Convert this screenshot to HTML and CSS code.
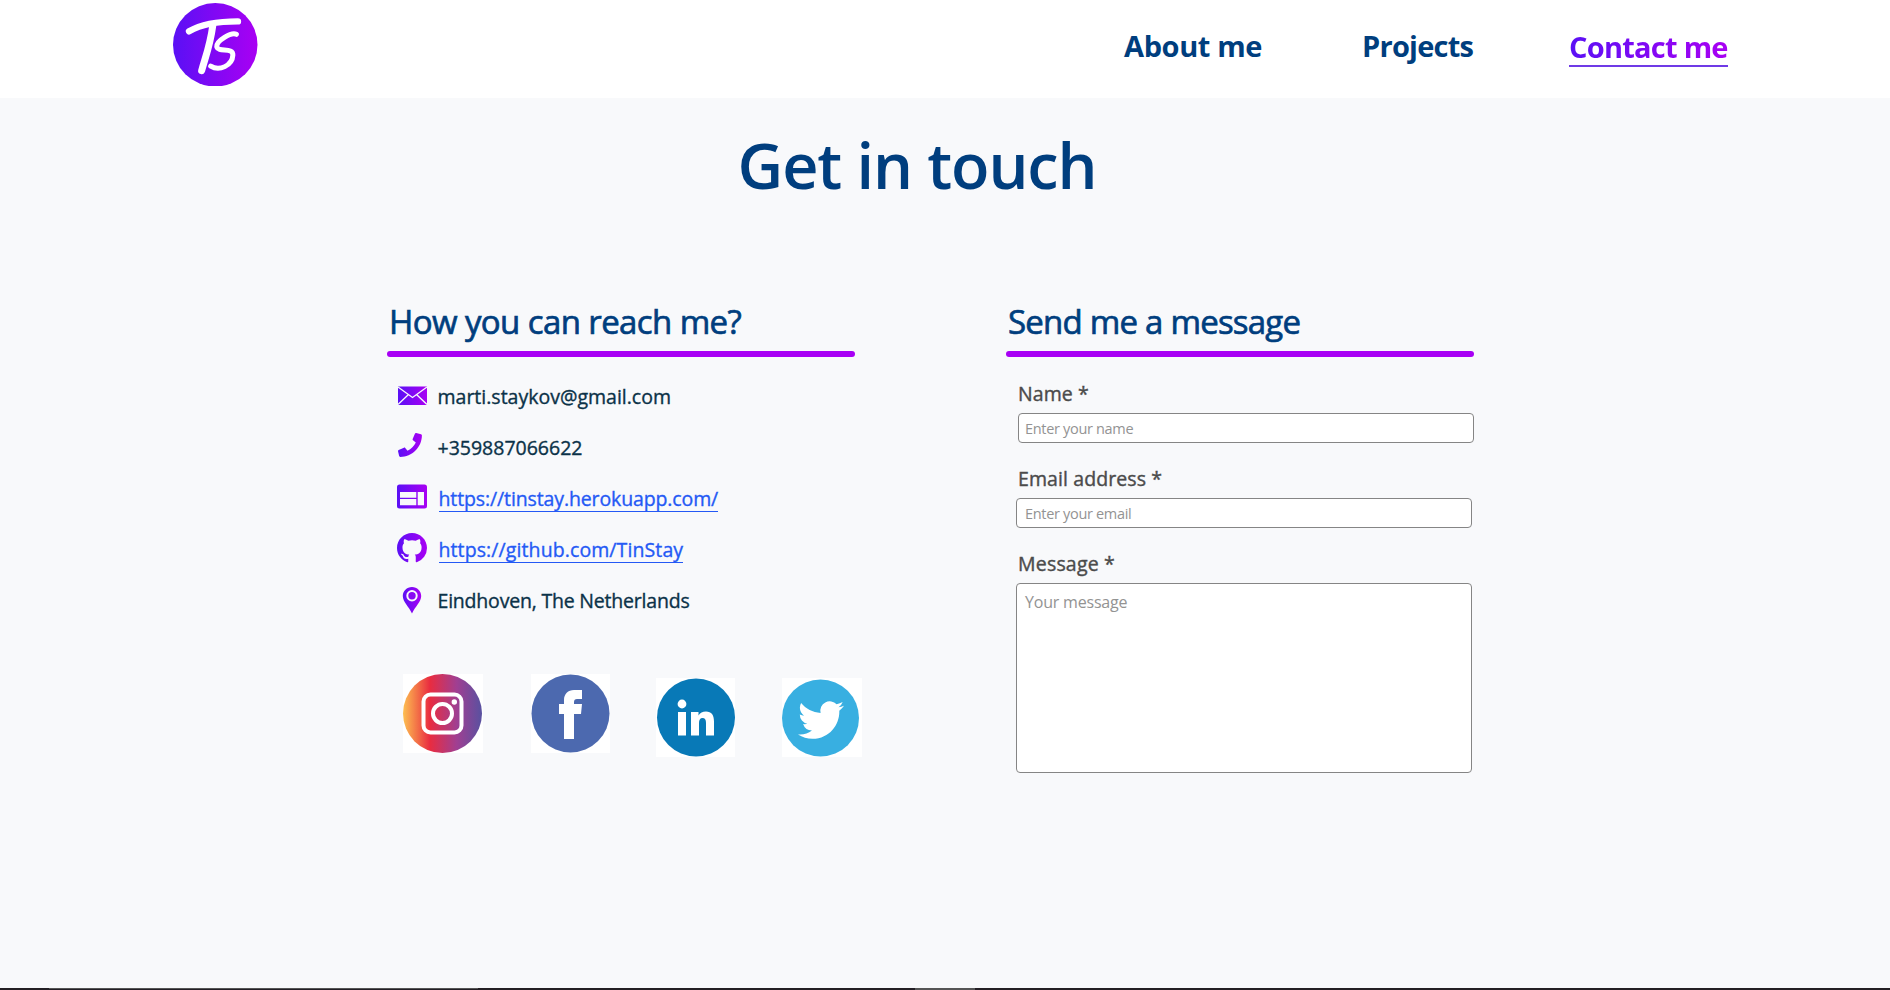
FILE: index.html
```html
<!DOCTYPE html>
<html lang="en">
<head>
<meta charset="utf-8">
<title>Contact me</title>
<link rel="stylesheet" href="styles.css">
</head>
<body>
<header class="header">
  <svg class="logo" viewBox="0 0 84 84" preserveAspectRatio="none">
    <defs>
      <linearGradient id="brand" x1="0" x2="1" y1="0" y2="0"><stop offset="0" stop-color="#5a10f5"/><stop offset="1" stop-color="#a900f3"/></linearGradient>
      <linearGradient id="insta" x1="0" x2="1" y1="0" y2="0"><stop offset="0" stop-color="#fdbf50"/><stop offset=".34" stop-color="#e92c40"/><stop offset=".68" stop-color="#a03f92"/><stop offset="1" stop-color="#5851a0"/></linearGradient>
    </defs>
    <circle cx="42" cy="42" r="42" fill="url(#brand)"/>
    <g fill="none" stroke="#fff" stroke-linecap="round" stroke-linejoin="round">
      <path stroke-width="6.500" d="M16 28.500C27 22 40 18.500 64.500 18.500"/>
      <path stroke-width="7" d="M39.500 23C37 42 33 52 28.500 68"/>
      <path stroke-width="5" d="M63 31.500C58 29 43 38 43.500 44C45 50 60 44 59.500 52.500C59 63 46 69 37.500 63.500"/>
    </g>
  </svg>
  <nav class="nav">
    <a class="nav-link about"><span>About me</span></a>
    <a class="nav-link projects"><span>Projects</span></a>
    <a class="nav-link active"><span>Contact me</span></a>
  </nav>
</header>
<main class="main">
  <h1 class="title"><span>Get in touch</span></h1>
  <div class="columns">
    <section class="column">
      <h2 class="heading reach"><span>How you can reach me?</span></h2>
      <ul class="contacts">
        <li class="contact"><svg class="icon" viewBox="0 0 30 30"><path fill="url(#brand)" d="M1 6.500h29v18.500H1z"/><path fill="none" stroke="#f8f9fb" stroke-width="1.300" d="M1 7l14.500 10.500L30 7M1 24.500l10.500-10M30 24.500l-10.500-10"/></svg><span class="mail">marti.staykov@gmail.com</span></li>
        <li class="contact"><svg class="icon" viewBox="0 0 30 30"><path fill="url(#brand)" transform="translate(1 2) scale(.0467)" d="M493.400 24.600l-104-24c-11.300-2.600-22.900 3.300-27.500 13.900l-48 112c-4.200 9.800-1.400 21.300 6.900 28l60.600 49.600c-36 76.700-98.900 140.500-177.200 177.200l-49.600-60.600c-6.800-8.300-18.200-11.100-28-6.900l-112 48C3.900 366.500-2 378.100.6 389.400l24 104C27.100 504.200 36.700 512 48 512c256.100 0 464-207.500 464-464 0-11.200-7.700-20.900-18.600-23.400z"/></svg><span class="phone">+359887066622</span></li>
        <li class="contact"><svg class="icon" viewBox="0 0 30 30"><path fill="url(#brand)" fill-rule="evenodd" d="M2.500 2.500h25a2.500 2.500 0 0 1 2.500 2.500v19a2.500 2.500 0 0 1-2.500 2.500h-25A2.500 2.500 0 0 1 0 24v-19A2.500 2.500 0 0 1 2.500 2.500zM3 10v5.700h16.300V10zM3 17v6.200h16.300v-6.200zM20.700 10v13.200H27V10z"/></svg><a class="web">https://tinstay.herokuapp.com/</a></li>
        <li class="contact"><svg class="icon" viewBox="0 0 16 16"><path fill="url(#brand)" d="M8 0C3.580 0 0 3.580 0 8c0 3.540 2.290 6.530 5.470 7.590.4.07.55-.17.55-.38 0-.19-.01-.82-.01-1.490-2.010.37-2.530-.49-2.690-.94-.09-.23-.48-.94-.82-1.130-.28-.15-.68-.52-.01-.53.63-.01 1.080.58 1.230.82.72 1.210 1.870.87 2.330.66.07-.52.28-.87.51-1.070-1.780-.2-3.640-.89-3.640-3.950 0-.87.31-1.590.82-2.150-.08-.2-.36-1.020.08-2.120 0 0 .67-.21 2.200.82.64-.18 1.320-.27 2-.27s1.360.09 2 .27c1.530-1.040 2.200-.82 2.200-.82.44 1.100.16 1.920.08 2.120.51.56.82 1.270.82 2.150 0 3.070-1.870 3.750-3.650 3.950.29.25.54.73.54 1.480 0 1.070-.01 1.930-.01 2.200 0 .21.15.46.55.38A8.010 8.010 0 0016 8c0-4.420-3.580-8-8-8z"/></svg><a class="git">https://github.com/TinStay</a></li>
        <li class="contact"><svg class="icon" viewBox="0 0 30 30"><path fill="url(#brand)" d="M15 3c-5.200 0-9.200 4-9.200 9 0 5.700 6 10.500 9.200 17.500 3.200-7 9.200-11.800 9.200-17.500 0-5-4-9-9.200-9z"/><circle cx="15" cy="11.700" r="4.700" fill="#8a08f4" stroke="#f8f9fb" stroke-width="2"/></svg><span class="place">Eindhoven, The Netherlands</span></li>
      </ul>
      <div class="socials">
        <svg class="social" viewBox="0 0 80 79"><path fill="#fff" d="M0 0h80v79H0z"/><circle cx="39.500" cy="39.500" r="39.500" fill="url(#insta)"/><g fill="none" stroke="#fff" stroke-width="4"><rect x="20.500" y="20.500" width="38" height="38" rx="7"/><circle cx="39.500" cy="39.500" r="9.500"/></g><circle cx="51.300" cy="28" r="2.700" fill="#fff"/></svg>
        <svg class="social facebook" viewBox="0 0 79 79"><path fill="#fff" d="M0 0h79v79H0z"/><circle cx="39.500" cy="39.500" r="39" fill="#4c69af"/><path fill="#fff" d="M33 65V40h-5V30h5v-4c0-6 4-10 10-10h8v9h-5c-2 0-3 1-3 3v2h8l-1 10h-7v25z"/></svg>
        <svg class="social low linkedin" viewBox="0 0 79 79"><path fill="#fff" d="M0 0h79v79H0z"/><circle cx="40" cy="39.500" r="39" fill="#0879b7"/><g fill="#fff"><circle cx="26" cy="26" r="4.400"/><path d="M22 34h8v23.500h-8zM35 34h7.500v3.500C44 35 46.500 33.500 50 33.500c5.500 0 8 3.500 8 10v14h-8V45c0-3.500-1-5-3.500-5S43 42 43 45v12.500h-8z"/></g></svg>
        <svg class="social low twitter" viewBox="0 0 80 79"><path fill="#fff" d="M0 0h80v79H0z"/><circle cx="38.500" cy="40" r="38.500" fill="#38afe1"/><path fill="#fff" transform="translate(16 19) scale(1.917)" d="M23.953 4.570a10 10 0 01-2.825.775 4.958 4.958 0 002.163-2.723c-.951.555-2.005.959-3.127 1.184a4.920 4.920 0 00-8.384 4.482C7.690 8.095 4.067 6.130 1.640 3.162a4.822 4.822 0 00-.666 2.475c0 1.710.87 3.213 2.188 4.096a4.904 4.904 0 01-2.228-.616v.06a4.923 4.923 0 003.946 4.827 4.996 4.996 0 01-2.212.085 4.936 4.936 0 004.604 3.417 9.867 9.867 0 01-6.102 2.105c-.39 0-.779-.023-1.170-.067a13.995 13.995 0 007.557 2.209c9.053 0 13.998-7.496 13.998-13.985 0-.21 0-.42-.015-.63A9.935 9.935 0 0024 4.590z"/></svg>
      </div>
    </section>
    <section class="column">
      <h2 class="heading send"><span>Send me a message</span></h2>
      <form class="form">
        <label class="label l1"><span>Name *</span></label>
        <div class="field first"><span class="p1">Enter your name</span></div>
        <label class="label l2"><span>Email address *</span></label>
        <div class="field"><span class="p2">Enter your email</span></div>
        <label class="label l3"><span>Message *</span></label>
        <div class="field area"><span class="p3">Your message</span></div>
      </form>
    </section>
  </div>
</main>
<footer class="strip"><div class="strip-light"></div><div class="strip-tab"></div></footer>
</body>
</html>
```
FILE: styles.css
```css
* { box-sizing: border-box; }
body {
  margin: 0;
  height: 990px;
  overflow: hidden;
  display: flex;
  flex-direction: column;
  background: #f8f9fb;
  font-family: "Open Sans", "Noto Sans", sans-serif;
}
.header {
  height: 98px;
  flex: none;
  display: flex;
  align-items: flex-start;
  background: #fff;
  padding: 2.500px 0 0 173px;
}
.logo { width: 84.500px; height: 83.500px; }
.nav {
  display: grid;
  grid-template-columns: 238px 207px 160px;
  margin-left: 866.500px;
  padding-top: 23.500px;
  font-size: 29px;
  font-weight: 700;
  line-height: 40px;
  color: #003e7e;
  white-space: nowrap;
}
.about { letter-spacing: -.38px; }
.projects { letter-spacing: -.75px; }
.active { letter-spacing: -.75px; }
.active span {
  display: inline-block;
  width: 159px;
  padding-top: 1px;
  height: 41px;
  border-bottom: 2px solid #6f3ae6;
  background: linear-gradient(90deg, #5a10f5, #a900f3);
  background-clip: text;
  -webkit-background-clip: text;
  color: transparent;
}
.main { flex: 1; }
.title {
  margin: 26.500px 0 0 737.500px;
  font-size: 63px;
  font-weight: 600;
  line-height: 80px;
  letter-spacing: -1.080px;
  color: #003e7e;
}
.columns {
  display: grid;
  grid-template-columns: 468px 468px;
  column-gap: 151px;
  margin: 96px 0 0 387px;
}
.heading {
  margin: 0;
  padding: 0 0 0 2px;
  height: 57px;
  font-size: 33px;
  font-weight: 400;
  line-height: 42px;
  color: #003e7e;
  -webkit-text-stroke: .7px #003e7e;
  position: relative;
}
.reach { letter-spacing: -.6px; }
.send { letter-spacing: -.78px; }
.heading::after {
  content: "";
  position: absolute;
  left: 0;
  right: 0;
  bottom: .500px;
  height: 6px;
  border-radius: 3px;
  background: #a800f5;
}
.contacts { list-style: none; margin: 13px 0 0 10px; padding: 0; }
.contact {
  display: flex;
  align-items: center;
  height: 51px;
  gap: 10.500px;
  font-size: 19.500px;
  color: #0b3248;
  -webkit-text-stroke: .35px currentColor;
  white-space: nowrap;
}
.icon { width: 30px; height: 30px; flex: none; margin-bottom: 2px; -webkit-text-stroke: 0; }
.web, .git {
  color: #2459f5;
  padding-top: 2px;
  margin-left: 1px;
  line-height: 24px;
  border-bottom: 1.500px solid #2459f5;
}
.web { letter-spacing: -.12px; }
.git { letter-spacing: .1px; }
.place { letter-spacing: -.2px; }
.socials { display: flex; margin: 48px 0 0 16px; }
.social { width: 80px; height: 79px; flex: none; }
.facebook { width: 79px; margin-left: 48px; }
.low { margin-top: 4px; }
.linkedin { width: 79px; margin-left: 46px; }
.twitter { margin-left: 47px; }
.form { padding: 22px 0 0 10px; }
.label {
  display: block;
  padding-left: 2px;
  height: 33px;
  font-size: 19.500px;
  line-height: 28px;
  letter-spacing: .1px;
  color: #4b4b4b;
  -webkit-text-stroke: .4px #4b4b4b;
}
.l3 { letter-spacing: .2px; }
.field {
  width: 456px;
  height: 30px;
  margin-bottom: 22px;
  padding: 0 8px;
  border: 1.500px solid #858585;
  border-radius: 4px;
  background: #fff;
  font-size: 14.500px;
  line-height: 29px;
  letter-spacing: -.32px;
  color: #939393;
}
.first { margin-left: 2px; padding-left: 6px; }
.area { height: 190px; font-size: 16px; line-height: 36px; letter-spacing: -.2px; }
.strip { height: 2px; flex: none; display: flex; background: #231f24; }
.strip-light { width: 429px; height: 1px; margin-left: 49px; background: #555; }
.strip-tab { width: 60px; margin-left: 437px; background: #555; }
```
